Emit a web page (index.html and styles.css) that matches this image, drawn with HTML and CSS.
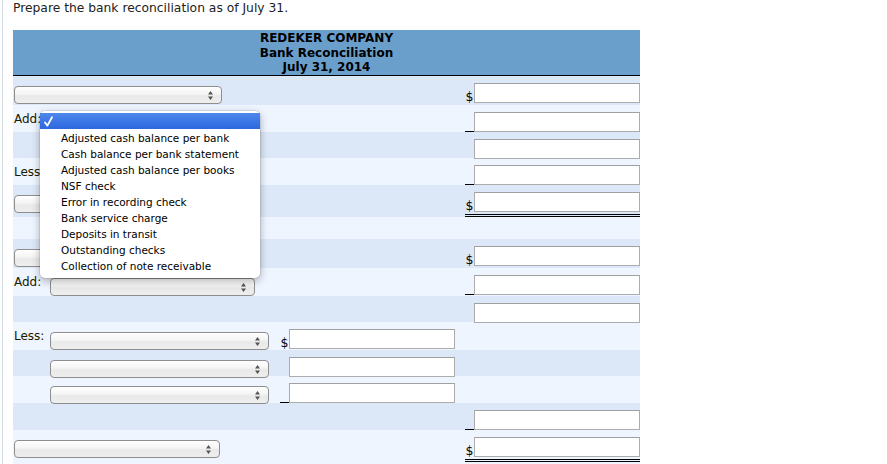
FILE: index.html
```html
<!DOCTYPE html>
<html lang="en">
<head>
<meta charset="utf-8">
<title>Bank Reconciliation</title>
<link rel="stylesheet" href="styles.css">
</head>
<body>
<div class="page">
  <p class="prompt">Prepare the bank reconciliation as of July 31.</p>
  <div class="recon">
    <div class="head">REDEKER COMPANY<br>Bank Reconciliation<br>July 31, 2014</div>

    <div class="row dark h29">
      <div class="c-left"><div class="sel w208"><svg class="arr" width="5" height="9" viewBox="0 0 5 9"><path d="M0 3.5L2.5 0L5 3.5Z M0 5.5L2.5 9L5 5.5Z"/></svg></div></div>
      <div class="c-mid"></div>
      <div class="c-right"><span class="pre">$</span><input class="amt" type="text"></div>
    </div>

    <div class="row light h27">
      <div class="c-left"><span class="lbl">Add:</span><div class="sel w205"><svg class="arr" width="5" height="9" viewBox="0 0 5 9"><path d="M0 3.5L2.5 0L5 3.5Z M0 5.5L2.5 9L5 5.5Z"/></svg></div></div>
      <div class="c-mid"></div>
      <div class="c-right"><span class="pre line"></span><input class="amt" type="text"></div>
    </div>

    <div class="row dark h26">
      <div class="c-left"></div>
      <div class="c-mid"></div>
      <div class="c-right"><span class="pre"></span><input class="amt" type="text"></div>
    </div>

    <div class="row light h27">
      <div class="c-left"><span class="lbl">Less:</span><div class="sel w205"><svg class="arr" width="5" height="9" viewBox="0 0 5 9"><path d="M0 3.5L2.5 0L5 3.5Z M0 5.5L2.5 9L5 5.5Z"/></svg></div></div>
      <div class="c-mid"></div>
      <div class="c-right"><span class="pre line"></span><input class="amt" type="text"></div>
    </div>

    <div class="row dark h32">
      <div class="c-left"><div class="sel w208"><svg class="arr" width="5" height="9" viewBox="0 0 5 9"><path d="M0 3.5L2.5 0L5 3.5Z M0 5.5L2.5 9L5 5.5Z"/></svg></div></div>
      <div class="c-mid"></div>
      <div class="c-right total"><span class="pre">$</span><input class="amt" type="text"></div>
    </div>

    <div class="row light h22"></div>

    <div class="row dark h29">
      <div class="c-left"><div class="sel w208"><svg class="arr" width="5" height="9" viewBox="0 0 5 9"><path d="M0 3.5L2.5 0L5 3.5Z M0 5.5L2.5 9L5 5.5Z"/></svg></div></div>
      <div class="c-mid"></div>
      <div class="c-right"><span class="pre">$</span><input class="amt" type="text"></div>
    </div>

    <div class="row light h28">
      <div class="c-left"><span class="lbl">Add:</span><div class="sel w205"><svg class="arr" width="5" height="9" viewBox="0 0 5 9"><path d="M0 3.5L2.5 0L5 3.5Z M0 5.5L2.5 9L5 5.5Z"/></svg></div></div>
      <div class="c-mid"></div>
      <div class="c-right"><span class="pre line"></span><input class="amt" type="text"></div>
    </div>

    <div class="row dark h26">
      <div class="c-left"></div>
      <div class="c-mid"></div>
      <div class="c-right"><span class="pre"></span><input class="amt" type="text"></div>
    </div>

    <div class="row light h28">
      <div class="c-left"><span class="lbl">Less:</span><div class="sel w219"><svg class="arr" width="5" height="9" viewBox="0 0 5 9"><path d="M0 3.5L2.5 0L5 3.5Z M0 5.5L2.5 9L5 5.5Z"/></svg></div></div>
      <div class="c-mid"><span class="pre">$</span><input class="amt" type="text"></div>
      <div class="c-right"></div>
    </div>

    <div class="row dark h26">
      <div class="c-left"><span class="lbl"></span><div class="sel w219"><svg class="arr" width="5" height="9" viewBox="0 0 5 9"><path d="M0 3.5L2.5 0L5 3.5Z M0 5.5L2.5 9L5 5.5Z"/></svg></div></div>
      <div class="c-mid"><span class="pre"></span><input class="amt" type="text"></div>
      <div class="c-right"></div>
    </div>

    <div class="row light h27">
      <div class="c-left"><span class="lbl"></span><div class="sel w219"><svg class="arr" width="5" height="9" viewBox="0 0 5 9"><path d="M0 3.5L2.5 0L5 3.5Z M0 5.5L2.5 9L5 5.5Z"/></svg></div></div>
      <div class="c-mid"><span class="pre line"></span><input class="amt" type="text"></div>
      <div class="c-right"></div>
    </div>

    <div class="row dark h27">
      <div class="c-left"></div>
      <div class="c-mid"></div>
      <div class="c-right"><span class="pre line"></span><input class="amt" type="text"></div>
    </div>

    <div class="row light h34">
      <div class="c-left"><div class="sel w206"><svg class="arr" width="5" height="9" viewBox="0 0 5 9"><path d="M0 3.5L2.5 0L5 3.5Z M0 5.5L2.5 9L5 5.5Z"/></svg></div></div>
      <div class="c-mid"></div>
      <div class="c-right total"><span class="pre">$</span><input class="amt" type="text"></div>
    </div>

    <ul class="menu">
      <li class="on"><svg class="chk" width="9" height="11" viewBox="0 0 9 11"><path d="M1 6.5L3.4 9.6L8 1.2" fill="none" stroke="#fff" stroke-width="1.8" stroke-linecap="round" stroke-linejoin="round"/></svg></li>
      <li>Adjusted cash balance per bank</li>
      <li>Cash balance per bank statement</li>
      <li>Adjusted cash balance per books</li>
      <li>NSF check</li>
      <li>Error in recording check</li>
      <li>Bank service charge</li>
      <li>Deposits in transit</li>
      <li>Outstanding checks</li>
      <li>Collection of note receivable</li>
    </ul>
  </div>
</div>
</body>
</html>
```

FILE: styles.css
```css
* { box-sizing: border-box; }

html, body {
  margin: 0;
  padding: 0;
  background: #fff;
}

body {
  font-family: "DejaVu Sans", Verdana, sans-serif;
  color: #000;
}

.page {
  margin-left: 2px;
  border-left: 1px solid #d3dbe4;
  padding-left: 10px;
  min-height: 464px;
}

.prompt {
  margin: 0;
  font-size: 12.3px;
  line-height: 17px;
  color: #222;
}

.recon {
  position: relative;
  width: 627px;
  margin-top: 13px;
}

.head {
  height: 46px;
  background: #6a9fcb;
  border-bottom: 1px solid #000;
  padding-top: 1px;
  text-align: center;
  font-weight: bold;
  font-size: 12px;
  line-height: 14.5px;
  color: #000;
}

.row {
  display: flex;
  align-items: flex-start;
  padding-top: 7px;
}

.dark { background: #dce7f7; }
.light { background: #eef5ff; }

.h22 { height: 22px; }
.h26 { height: 26px; }
.h27 { height: 27px; }
.h28 { height: 28px; }
.h29 { height: 29px; }
.h32 { height: 32px; }
.h34 { height: 34px; }

.c-left {
  width: 267px;
  display: flex;
  align-items: flex-start;
  padding-left: 1px;
}

.c-mid {
  width: 175px;
  display: flex;
  align-items: flex-end;
}

.c-right {
  width: 175px;
  margin-left: 10px;
  display: flex;
  align-items: flex-end;
}

.total {
  border-bottom: 3px double #000;
  padding-bottom: 2px;
}

.lbl {
  width: 36px;
  margin-top: 0;
  font-size: 12px;
  line-height: 14px;
  color: #1a1a00;
}

.sel {
  height: 18px;
  margin-top: 3px;
  border: 1px solid #8e8e8e;
  border-radius: 4px;
  background: linear-gradient(#ffffff, #f4f4f4 45%, #e9e9e9 55%, #eeeeee);
  display: flex;
  align-items: center;
  justify-content: flex-end;
  padding-right: 8px;
}

.w205 { width: 205px; }
.w206 { width: 206px; }
.w208 { width: 208px; }
.w219 { width: 219px; }

.arr { fill: #555; display: block; }

.pre {
  width: 9px;
  height: 20px;
  flex: none;
  display: flex;
  align-items: flex-end;
  justify-content: center;
  font-size: 12.5px;
  line-height: 13px;
  color: #000;
}

.pre.line {
  border-bottom: 1px solid #000;
}

.amt {
  width: 166px;
  height: 20px;
  margin: 0;
  padding: 0 3px;
  border: 1px solid #acacac;
  border-top-color: #a0a0a0;
  background: #fff;
  font: 12px "DejaVu Sans", sans-serif;
}

.menu {
  position: absolute;
  left: 27px;
  top: 81px;
  width: 220px;
  margin: 0;
  padding: 2px 0 5px;
  list-style: none;
  background: #fff;
  border-radius: 5px;
  box-shadow: 0 0 0 1px rgba(0, 0, 0, 0.08), 0 3px 8px rgba(0, 0, 0, 0.3);
  font-size: 10.5px;
  line-height: 18px;
  color: #000;
}

.menu li {
  height: 16px;
  padding-left: 21px;
  white-space: nowrap;
}

.menu li.on {
  background: linear-gradient(#4d88ec, #2c67df);
  padding-left: 4px;
  display: flex;
  align-items: center;
}

.chk {
  display: block;
}
```
